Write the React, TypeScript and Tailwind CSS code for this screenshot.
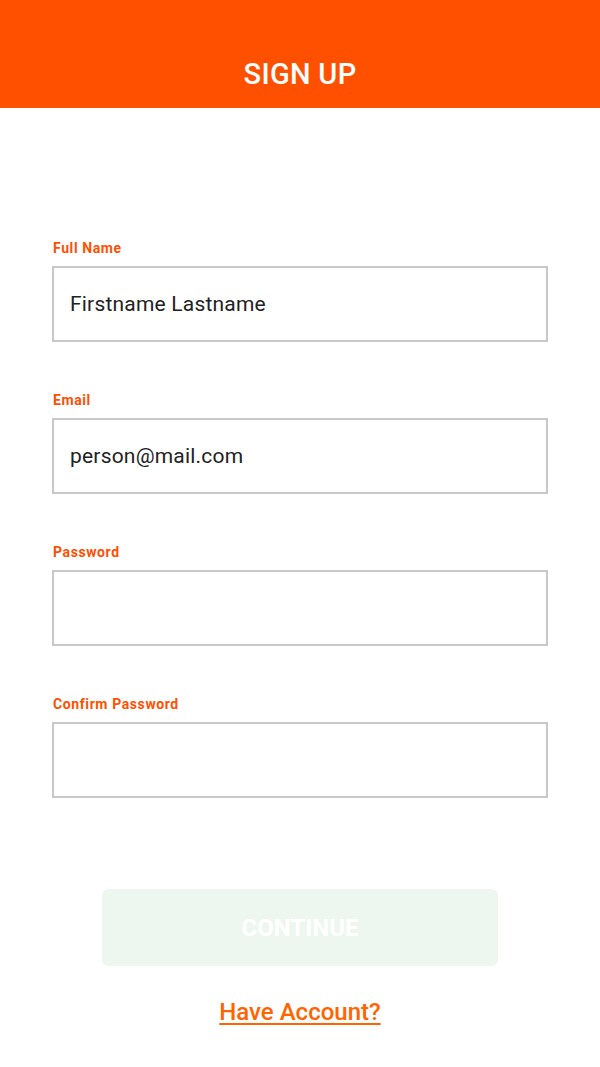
import React from "react";

const fields = [
  { label: "Full Name", value: "Firstname Lastname", type: "text" },
  { label: "Email", value: "person@mail.com", type: "email" },
  { label: "Password", value: "", type: "password" },
  { label: "Confirm Password", value: "", type: "password" },
];

export default function App() {
  return (
    <div className="min-h-[1067px] w-[600px] bg-white flex flex-col font-['Roboto',sans-serif]">
      <header className="h-[108px] bg-[#ff5000] flex items-end justify-center pb-[12px]">
        <h1 className="text-white text-[29px] font-medium tracking-[0.3px]">SIGN UP</h1>
      </header>

      <form className="flex flex-col px-[52px] pt-[132px]">
        {fields.map((f) => (
          <div key={f.label} className="flex flex-col mb-[50px]">
            <label className="text-[#ff5000] text-[14px] font-bold tracking-[0.6px] leading-[16px] mb-[10px] ml-[1px]">
              {f.label}
            </label>
            <input
              type={f.type}
              defaultValue={f.value}
              className="h-[76px] border-2 border-[#c8c8c8] px-[16px] text-[21px] tracking-[0.2px] text-[#222] outline-none"
            />
          </div>
        ))}
      </form>

      <div className="flex flex-col items-center pt-[41px]">
        <button
          type="button"
          className="w-[396px] h-[77px] rounded-[6px] bg-[#edf7ef] text-white text-[24px] font-bold"
        >
          CONTINUE
        </button>
        <a href="#" className="mt-[28px] text-[#ff6400] text-[24px] font-medium underline underline-offset-[3px]">
          Have Account?
        </a>
      </div>
    </div>
  );
}
